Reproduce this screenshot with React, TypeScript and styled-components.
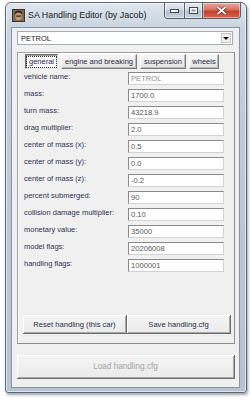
import styled, { createGlobalStyle } from 'styled-components';

const GlobalStyle = createGlobalStyle`
  html, body {
    margin: 0;
    padding: 0;
    background: #ffffff;
  }
  body {
    font-family: "Liberation Sans", Arial, sans-serif;
  }
`;

const Page = styled.div`
  width: 250px;
  height: 400px;
  padding: 2px 3px 0 5px;
  box-sizing: border-box;
`;

const Window = styled.div`
  width: 242px;
  height: 391px;
  box-sizing: border-box;
  display: flex;
  flex-direction: column;
  border: 1px solid #5d6876;
  border-radius: 6px 6px 3px 3px;
  background: linear-gradient(to bottom, #dfe6ee 0, #c9d4e0 26px, #bfcbd8 120px, #b7c3d0 100%);
  box-shadow: inset 0 0 0 1px rgba(255, 255, 255, 0.55), 1px 2px 3px rgba(40, 50, 70, 0.45);
`;

const TitleBar = styled.div`
  height: 24px;
  display: flex;
  align-items: flex-start;
  padding: 0 5px 0 6px;
`;

const AppIcon = styled.svg`
  width: 13px;
  height: 13px;
  margin-top: 6px;
  flex: none;
`;

const Title = styled.span`
  margin: 5px 0 0 3px;
  font-size: 8.9px;
  line-height: 14px;
  color: #1b1b1b;
  white-space: nowrap;
  flex: 1;
`;

const CaptionGroup = styled.div`
  display: flex;
  height: 15px;
  border: 1px solid #56606e;
  border-top: none;
  border-radius: 0 0 4px 4px;
  overflow: hidden;
`;

const CaptionButton = styled.div<{ $w: number; $close?: boolean }>`
  width: ${(p) => p.$w}px;
  display: flex;
  align-items: center;
  justify-content: center;
  box-shadow: inset 0 0 0 1px rgba(255, 255, 255, 0.45);
  background: ${(p) =>
    p.$close
      ? 'linear-gradient(to bottom, #e8a89c 0, #d6705f 45%, #c5412c 55%, #d2664e 100%)'
      : 'linear-gradient(to bottom, #e6ebf1 0, #cfd8e2 45%, #b5c2d0 55%, #c6d1dd 100%)'};
  & + & {
    border-left: 1px solid #56606e;
  }
`;

const Client = styled.div`
  flex: 1;
  margin: 0 6px 4px 5px;
  background: #f0f0f0;
  border: 1px solid #8995a4;
  display: flex;
  flex-direction: column;
  padding: 3px 6px 0 5px;
`;

const Combo = styled.div`
  height: 14px;
  box-sizing: border-box;
  width: 216px;
  background: #fff;
  border: 1px solid #a5acb5;
  display: flex;
  align-items: center;
  justify-content: space-between;
  padding-left: 3px;
  font-size: 7.5px;
  color: #222;
`;

const ComboArrow = styled.div`
  width: 10px;
  height: 10px;
  margin-right: 1px;
  display: flex;
  align-items: center;
  justify-content: center;
  background: #f0f0f0;
  border: 1px solid #c6c6c6;
  box-sizing: border-box;
  &::after {
    content: '';
    border-left: 3px solid transparent;
    border-right: 3px solid transparent;
    border-top: 3px solid #111;
  }
`;

const TabPanel = styled.div`
  margin-top: 7px;
  width: 218px;
  height: 292px;
  box-sizing: border-box;
  border: 1px solid #a0a0a0;
  border-right-color: #8e8e8e;
  border-bottom-color: #8e8e8e;
  box-shadow: inset 1px 1px #fff;
  display: flex;
  flex-direction: column;
  padding: 1px 0 9px 5px;
`;

const TabRow = styled.div`
  display: flex;
  padding-left: 2px;
  gap: 3px;
`;

const Tab = styled.div<{ $w: number; $active?: boolean }>`
  width: ${(p) => p.$w}px;
  height: 15px;
  box-sizing: border-box;
  font-size: 7.5px;
  line-height: 13px;
  color: #2a2a44;
  white-space: nowrap;
  background: ${(p) => (p.$active ? '#fbfbfb' : 'linear-gradient(to bottom, #f6f6f6, #e4e4e4)')};
  border: 1px solid;
  border-color: ${(p) => (p.$active ? '#6b6b6b #e8e8e8 #e8e8e8 #6b6b6b' : '#fff #7a7a7a #7a7a7a #fff')};
  box-shadow: ${(p) => (p.$active ? 'inset 1px 1px #a0a0a0' : 'inset -1px -1px #bdbdbd')};
  display: flex;
  align-items: center;
  justify-content: center;
`;

const Focus = styled.span`
  outline: 1px dotted #333;
  outline-offset: 0;
  padding: 0 2px;
  line-height: 10px;
`;

const Fields = styled.div`
  display: flex;
  flex-direction: column;
  gap: 4px;
  margin-top: 3px;
`;

const Row = styled.div`
  display: flex;
  align-items: flex-start;
  height: 13px;
`;

const Label = styled.span`
  width: 104px;
  padding-left: 1px;
  font-size: 7.5px;
  line-height: 9px;
  color: #313150;
  white-space: nowrap;
`;

const Input = styled.div<{ $readonly?: boolean }>`
  width: 96px;
  height: 13px;
  box-sizing: border-box;
  background: #fff;
  border: 1px solid #d2d2d2;
  border-top-color: #8a8a8a;
  border-left-color: #8a8a8a;
  padding-left: 2px;
  font-size: 7.6px;
  line-height: 11px;
  color: ${(p) => (p.$readonly ? '#8c8c8c' : '#555')};
`;

const ButtonRow = styled.div`
  margin-top: auto;
  display: flex;
`;

const Button = styled.div<{ $w: number; $h: number; $disabled?: boolean }>`
  width: ${(p) => p.$w}px;
  height: ${(p) => p.$h}px;
  box-sizing: border-box;
  display: flex;
  align-items: center;
  justify-content: center;
  font-size: 7.6px;
  color: ${(p) => (p.$disabled ? '#a3a3a3' : '#2a2a44')};
  background: linear-gradient(to bottom, #f4f4f4, #ebebeb);
  border-right: 1px solid #6e6e6e;
  border-bottom: 1px solid #6e6e6e;
  box-shadow: inset 1px 1px #fff, inset -1px -1px #a8a8a8;
  white-space: nowrap;
`;

const LoadButton = styled(Button)`
  margin-top: 11px;
  font-size: 8.2px;
`;

const rows: [string, string][] = [
  ['mass:', '1700.0'],
  ['turn mass:', '43218.9'],
  ['drag multiplier:', '2.0'],
  ['center of mass (x):', '0.5'],
  ['center of mass (y):', '0.0'],
  ['center of mass (z):', '-0.2'],
  ['percent submerged:', '90'],
  ['collision damage multiplier:', '0.10'],
  ['monetary value:', '35000'],
  ['model flags:', '20206008'],
  ['handling flags:', '1000001'],
];

export default function App() {
  return (
    <Page>
      <GlobalStyle />
      <Window>
        <TitleBar>
          <AppIcon viewBox="0 0 13 13">
            <rect x="0" y="0" width="13" height="13" fill="#3d3328" />
            <rect x="1" y="1" width="11" height="11" fill="#7d6a55" />
            <ellipse cx="6.5" cy="7.5" rx="3.3" ry="3.8" fill="#c49474" />
            <path d="M2.5 5.5 Q6.5 1 10.5 5.5 L10 3 Q6.5 0.5 3 3 Z" fill="#2e241b" />
            <rect x="4" y="6.5" width="5" height="1.2" fill="#3a2e22" />
          </AppIcon>
          <Title>SA Handling Editor (by Jacob)</Title>
          <CaptionGroup>
            <CaptionButton $w={19}>
              <svg width="9" height="4" viewBox="0 0 9 4">
                <rect x="0.5" y="0.5" width="8" height="3" fill="#fff" stroke="#3b4452" />
              </svg>
            </CaptionButton>
            <CaptionButton $w={17}>
              <svg width="9" height="7" viewBox="0 0 9 7">
                <rect x="0.5" y="0.5" width="8" height="6" fill="#fff" stroke="#3b4452" />
                <rect x="2.5" y="2.5" width="4" height="2" fill="#8a94a2" />
              </svg>
            </CaptionButton>
            <CaptionButton $w={37} $close>
              <svg width="11" height="9" viewBox="0 0 11 9">
                <path d="M1.5 1 L9.5 8 M9.5 1 L1.5 8" stroke="#5a1a10" strokeWidth="3" />
                <path d="M1.5 1 L9.5 8 M9.5 1 L1.5 8" stroke="#fff" strokeWidth="1.8" />
              </svg>
            </CaptionButton>
          </CaptionGroup>
        </TitleBar>
        <Client>
          <Combo>
            PETROL
            <ComboArrow />
          </Combo>
          <TabPanel>
            <TabRow>
              <Tab $w={33} $active>
                <Focus>general</Focus>
              </Tab>
              <Tab $w={76}>engine and breaking</Tab>
              <Tab $w={46}>suspension</Tab>
              <Tab $w={30}>wheels</Tab>
            </TabRow>
            <Fields>
              <Row>
                <Label>vehicle name:</Label>
                <Input $readonly>PETROL</Input>
              </Row>
              {rows.map(([label, value]) => (
                <Row key={label}>
                  <Label>{label}</Label>
                  <Input>{value}</Input>
                </Row>
              ))}
            </Fields>
            <ButtonRow>
              <Button $w={104} $h={19}>Reset handling (this car)</Button>
              <Button $w={104} $h={19}>Save handling.cfg</Button>
            </ButtonRow>
          </TabPanel>
          <LoadButton $w={218} $h={24} $disabled>
            Load handling.cfg
          </LoadButton>
        </Client>
      </Window>
    </Page>
  );
}
